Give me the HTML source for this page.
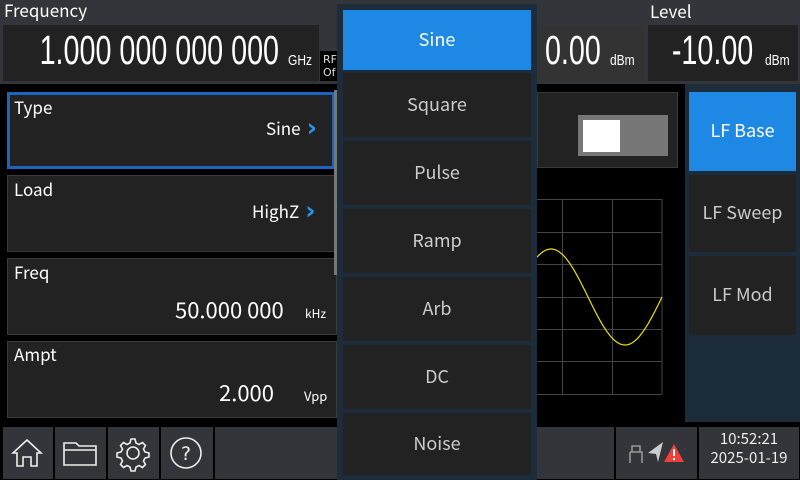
<!DOCTYPE html>
<html><head><meta charset="utf-8"><style>
*{margin:0;padding:0;box-sizing:border-box}
body{width:800px;height:480px;background:#000;position:relative;overflow:hidden;font-family:"Noto Sans CJK SC","DejaVu Sans",sans-serif;color:#fff}
.a{position:absolute}
.lbl{font-size:17px;color:#fff;line-height:22px}
.big{font-family:"Liberation Sans",sans-serif;font-size:41px;transform:scaleX(0.70);transform-origin:right center;white-space:nowrap;line-height:46px}
.unit{font-family:"Liberation Sans",sans-serif;font-size:15px;transform:scaleX(0.8);transform-origin:left center}
.card{background:#222;border:1px solid #3a3a3a}
.item{position:absolute;left:343px;width:188px;background:#222;color:#ccc;font-size:18px;display:flex;align-items:center;justify-content:center;padding-bottom:3px}
.side{position:absolute;left:689px;width:107px;background:#222;color:#ccc;font-size:18px;display:flex;align-items:center;justify-content:center;padding-bottom:3px}
.btn{position:absolute;top:427px;height:52px;background:#33353b}
.chev{color:#2196f3;font-weight:bold;font-family:"DejaVu Sans",sans-serif;font-size:25px;margin-left:6px;line-height:18px;vertical-align:-1px}
</style></head><body>
<div class="a" style="left:0;top:0;width:800px;height:84px;background:#33353b"></div>
<div class="a lbl" style="left:4px;top:-1px">Frequency</div>
<div class="a lbl" style="left:650px;top:0px">Level</div>
<div class="a" style="left:3px;top:25px;width:316px;height:56px;background:#222"></div>
<div class="a big" style="right:521px;top:27px">1.000 000 000 000</div>
<div class="a unit" style="left:288px;top:52px">GHz</div>
<div class="a" style="left:320px;top:51px;width:18px;height:30px;background:#000;font-size:11px;line-height:13px;padding:2px 0 0 3px;color:#ddd;font-family:'DejaVu Sans',sans-serif">RF<br>Of</div>
<div class="a" style="left:537px;top:25px;width:107px;height:56px;background:#333"></div>
<div class="a big" style="right:199px;top:27px">0.00</div>
<div class="a unit" style="left:610px;top:52px">dBm</div>
<div class="a" style="left:648px;top:25px;width:150px;height:56px;background:#222"></div>
<div class="a big" style="right:47px;top:27px">-10.00</div>
<div class="a unit" style="left:765px;top:52px">dBm</div>

<div class="a card" style="left:7px;top:92px;width:328px;height:77px;border:3px solid #1c64c0"></div>
<div class="a lbl" style="left:14px;top:96px">Type</div>
<div class="a lbl" style="left:266px;top:117px">Sine<span class="chev">›</span></div>
<div class="a card" style="left:7px;top:175px;width:330px;height:77px"></div>
<div class="a lbl" style="left:14px;top:178px">Load</div>
<div class="a lbl" style="left:252px;top:200px">HighZ<span class="chev">›</span></div>
<div class="a card" style="left:7px;top:258px;width:330px;height:77px"></div>
<div class="a lbl" style="left:14px;top:261px">Freq</div>
<div class="a" style="left:175px;top:294px;font-size:22px;line-height:30px">50.000 000</div>
<div class="a" style="left:305px;top:305px;font-size:12px">kHz</div>
<div class="a card" style="left:7px;top:341px;width:330px;height:77px"></div>
<div class="a lbl" style="left:14px;top:343px">Ampt</div>
<div class="a" style="left:219px;top:377px;font-size:22px;line-height:30px">2.000</div>
<div class="a" style="left:304px;top:386px;font-size:13px">Vpp</div>
<div class="a" style="left:334px;top:90px;width:3px;height:185px;background:#777"></div>

<div class="a" style="left:537px;top:92px;width:141px;height:76px;background:#222;border:1px solid #3a3a3a"></div>
<div class="a" style="left:578px;top:115px;width:90px;height:41px;background:#777"></div>
<div class="a" style="left:583px;top:120px;width:37px;height:32px;background:#fff"></div>
<svg class="a" style="left:530px;top:190px" width="140" height="220" viewBox="530 190 140 220">
<g stroke="#444" stroke-width="1" fill="none">
<path d="M530 199.5H662M530 232.5H662M530 264.5H662M530 297.5H662M530 329.5H662M530 361.5H662M530 394.5H662M562.5 199V394M612.5 199V394M662 199V394"/>
</g>
<path id="s" fill="none" stroke="#f0e000" stroke-width="1.2" d=""/>
</svg>
<script>
(function(){var d="";for(var x=537;x<=662;x++){var y=297+48*Math.sin((x-588)*Math.PI/74);d+=(x==537?"M":"L")+x+" "+y.toFixed(1);}document.getElementById("s").setAttribute("d",d);})();
</script>

<div class="a" style="left:685px;top:84px;width:115px;height:338px;background:#1c2c3a"></div>
<div class="side" style="top:92px;height:79px;background:#1e88e5;color:#fff">LF Base</div>
<div class="side" style="top:175px;height:77px">LF Sweep</div>
<div class="side" style="top:256px;height:79px">LF Mod</div>

<div class="a" style="left:0;top:426px;width:800px;height:54px;background:#000"></div>
<div class="btn" style="left:3px;width:50px"></div>
<div class="btn" style="left:55px;width:51px"></div>
<div class="btn" style="left:108px;width:51px"></div>
<div class="btn" style="left:161px;width:52px"></div>
<div class="btn" style="left:215px;width:399px"></div>
<div class="btn" style="left:616px;width:81px"></div>
<div class="btn" style="left:699px;width:100px"></div>
<svg class="a" style="left:0;top:426px" width="220" height="54" fill="none" stroke="#eee" stroke-width="1.6">
<path d="M13 27L27 14L41 27H37V40H31V31H23V40H17V27Z"/>
<path d="M64 17H76L79 20H96V39H64Z M64 24H96"/>
<circle cx="133" cy="27" r="6"/>
<path d="M131 13h4l1 4 3 1.5 3.5-2 3 3-2 3.5 1.5 3 4 1v4l-4 1-1.5 3 2 3.5-3 3-3.5-2-3 1.5-1 4h-4l-1-4-3-1.5-3.5 2-3-3 2-3.5-1.5-3-4-1v-4l4-1 1.5-3-2-3.5 3-3 3.5 2 3-1.5z"/>
<circle cx="186" cy="27" r="15"/>
<text x="186" y="34" fill="#eee" stroke="none" font-size="19" text-anchor="middle" font-family="DejaVu Sans">?</text>
</svg>
<svg class="a" style="left:615px;top:426px" width="85" height="54">
<path d="M17 20h8v6h-8zM15 26h12v11M15 26v11" fill="none" stroke="#aaa" stroke-width="1.3"/>
<path d="M48 16L33 27L41 28L43 36Z" fill="#ccc"/>
<path d="M59 18L69 36H49Z" fill="#f0403a"/>
<path d="M59 23v7M59 32v2" stroke="#fff" stroke-width="2"/>
</svg>
<div class="a" style="left:700px;top:429px;width:98px;text-align:center;font-size:15px;line-height:19px;color:#eee">10:52:21<br>2025-01-19</div>

<div class="a" style="left:337px;top:4px;width:200px;height:476px;background:#1c2c3a"></div>
<div class="item" style="top:10px;height:60px;background:#1e88e5;color:#fff">Sine</div>
<div class="item" style="top:73px;height:64px">Square</div>
<div class="item" style="top:141px;height:64px">Pulse</div>
<div class="item" style="top:209px;height:64px">Ramp</div>
<div class="item" style="top:277px;height:64px">Arb</div>
<div class="item" style="top:345px;height:64px">DC</div>
<div class="item" style="top:413px;height:62px">Noise</div>
</body></html>
